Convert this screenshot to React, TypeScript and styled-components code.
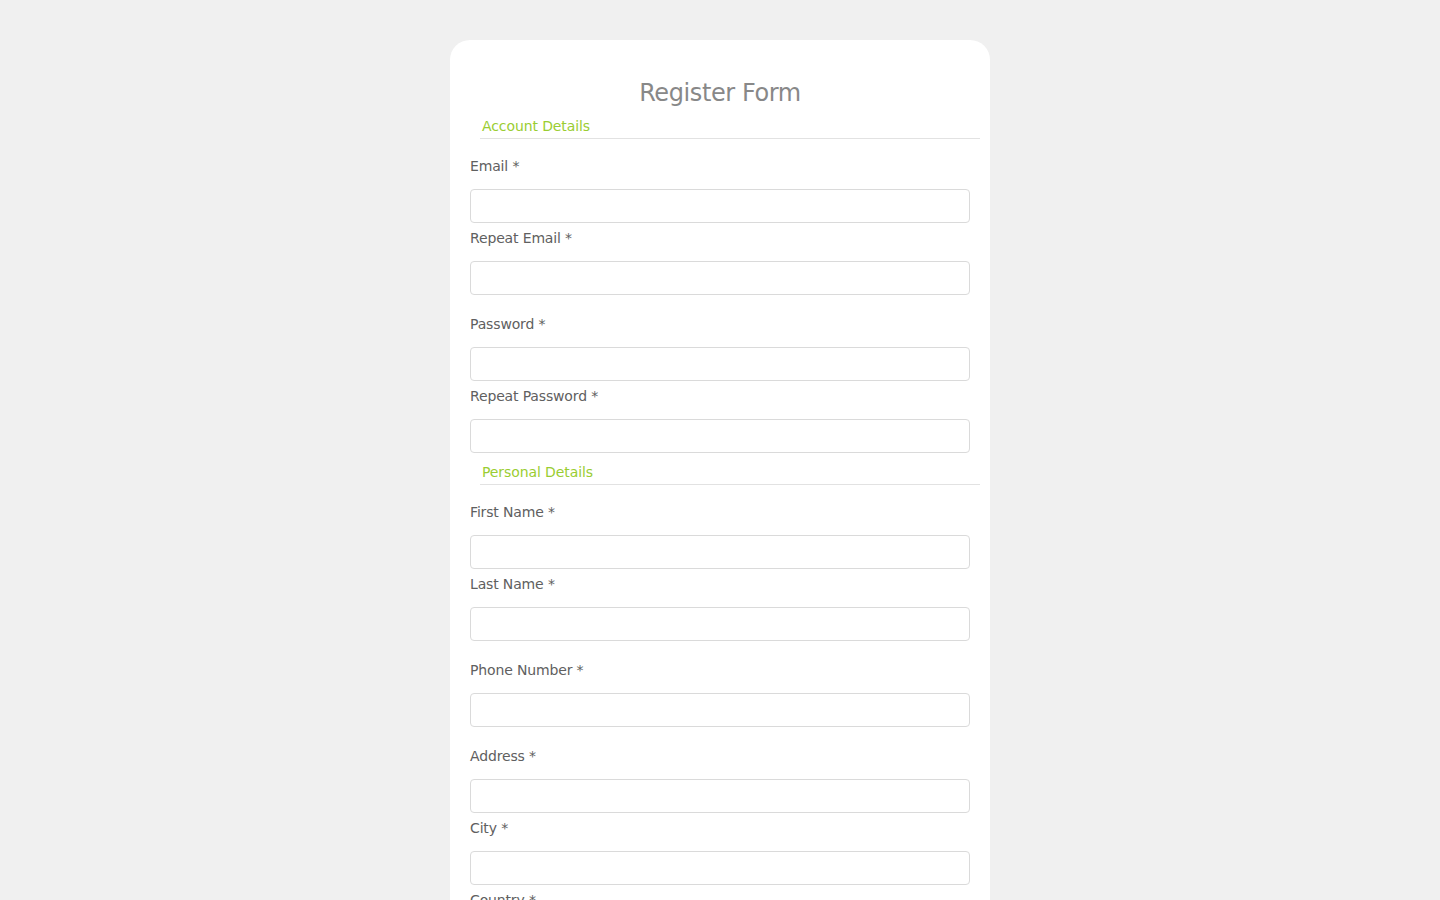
import React from "react";
import styled, { createGlobalStyle } from "styled-components";

const GlobalStyle = createGlobalStyle`
  html, body {
    margin: 0;
    padding: 0;
    background: #f0f0f0;
    font-family: "DejaVu Sans", Verdana, sans-serif;
  }
`;

const Page = styled.div`
  display: flex;
  justify-content: center;
  padding-top: 40px;
  min-height: 100vh;
  box-sizing: border-box;
`;

const Card = styled.form`
  width: 540px;
  box-sizing: border-box;
  background: #fff;
  border-radius: 20px;
  padding: 39px 20px 40px 20px;
`;

const Title = styled.h2`
  margin: 0 0 10px 0;
  text-align: center;
  font-size: 24px;
  line-height: 28px;
  font-weight: normal;
  letter-spacing: -0.4px;
  color: #888;
`;

const Legend = styled.div<{ $first?: boolean }>`
  margin: ${(p) => (p.$first ? "0" : "10px")} -10px 18px 10px;
  padding: 0 0 3px 2px;
  border-bottom: 1px solid #e2e2e2;
  font-size: 14px;
  line-height: 18px;
  letter-spacing: -0.1px;
  color: #9acd32;
`;

const Field = styled.div<{ $spaced?: boolean }>`
  display: flex;
  flex-direction: column;
  margin-bottom: ${(p) => (p.$spaced ? "20px" : "6px")};
`;

const Label = styled.label`
  font-size: 14px;
  line-height: 18px;
  letter-spacing: -0.15px;
  color: #606060;
  margin-bottom: 14px;
`;

const Input = styled.input`
  box-sizing: border-box;
  width: 500px;
  height: 34px;
  border: 1px solid #dadada;
  border-radius: 4px;
  padding: 0 10px;
  font-family: inherit;
  font-size: 14px;
  color: #555;
  outline: none;
`;

const account = [
  { label: "Email", type: "email" },
  { label: "Repeat Email", type: "email", spaced: true },
  { label: "Password", type: "password" },
  { label: "Repeat Password", type: "password" },
];

const personal = [
  { label: "First Name", type: "text" },
  { label: "Last Name", type: "text", spaced: true },
  { label: "Phone Number", type: "tel", spaced: true },
  { label: "Address", type: "text" },
  { label: "City", type: "text" },
  { label: "Country", type: "text" },
  { label: "Zip Code", type: "text" },
];

export default function App() {
  const renderField = (f) => (
    <Field key={f.label} $spaced={f.spaced}>
      <Label>{f.label} *</Label>
      <Input type={f.type} />
    </Field>
  );

  return (
    <>
      <GlobalStyle />
      <Page>
        <Card onSubmit={(e) => e.preventDefault()}>
          <Title>Register Form</Title>
          <Legend $first>Account Details</Legend>
          {account.map(renderField)}
          <Legend>Personal Details</Legend>
          {personal.map(renderField)}
        </Card>
      </Page>
    </>
  );
}
